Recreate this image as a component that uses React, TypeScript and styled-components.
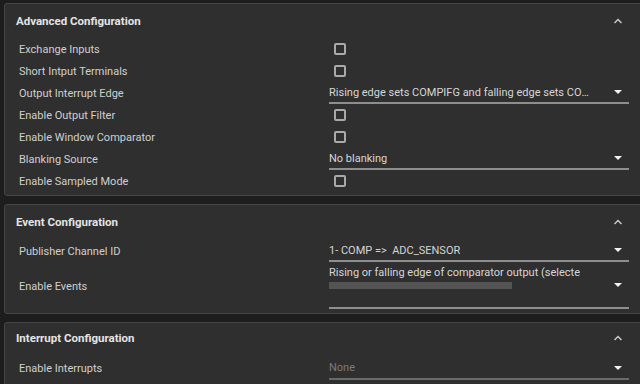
import styled, { createGlobalStyle } from "styled-components";

const Global = createGlobalStyle`
  html, body {
    margin: 0;
    padding: 0;
    background: #1d1d1d;
    overflow: hidden;
  }
  body {
    font-family: Roboto, "Liberation Sans", sans-serif;
    font-size: 11px;
    color: #d2d2d2;
  }
`;

const Page = styled.div`
  display: flex;
  flex-direction: column;
  gap: 8px;
  padding: 3px 0 0 4px;
  margin-right: -8px;
`;

const Panel = styled.section<{ $pb?: number }>`
  background: #2f2f2f;
  border: 1px solid #454545;
  border-radius: 3px;
  padding-bottom: ${(p) => p.$pb ?? 3}px;
`;

const Header = styled.div<{ $h?: number }>`
  display: flex;
  align-items: center;
  justify-content: space-between;
  height: ${(p) => p.$h ?? 34}px;
  padding: 0 24px 0 11px;
  font-weight: 700;
  font-size: 11.5px;
  color: #e4e4e4;
`;

const Row = styled.div<{ $h?: number }>`
  display: grid;
  grid-template-columns: 310px 300px;
  align-items: center;
  height: ${(p) => p.$h ?? 22}px;
  padding-left: 14px;
`;

const Label = styled.div`
  color: #d0d0d0;
`;

const Check = styled.div`
  width: 8px;
  height: 8px;
  margin-left: 5px;
  border: 2px solid #a9a9a9;
  border-radius: 2px;
`;

const Select = styled.div<{ $disabled?: boolean }>`
  display: flex;
  align-items: center;
  justify-content: space-between;
  height: 20px;
  border-bottom: 2px solid ${(p) => (p.$disabled ? "#6a6a6a" : "#8e8e8e")};
  padding-right: 6px;
  color: ${(p) => (p.$disabled ? "#7a7a7a" : "#d6d6d6")};
  white-space: nowrap;
`;

const Value = styled.span`
  overflow: hidden;
  text-overflow: ellipsis;
  max-width: 266px;
`;

const MultiSelect = styled.div`
  display: flex;
  justify-content: space-between;
  height: 44px;
  border-bottom: 2px solid #8e8e8e;
  padding-right: 6px;
  color: #d6d6d6;
`;

const Multi = styled.div`
  display: flex;
  flex-direction: column;
  gap: 2px;
  padding-top: 3px;
`;

const MultiText = styled.div`
  width: 251px;
  overflow: hidden;
  white-space: nowrap;
  line-height: 14px;
`;

const Bar = styled.div`
  width: 183px;
  height: 7px;
  background: #545454;
`;

const CaretSlot = styled.div`
  display: flex;
  align-items: center;
`;

const Caret = () => (
  <svg width="10" height="6" viewBox="0 0 10 6">
    <path d="M1 1h8L5 5z" fill="#f2f2f2" />
  </svg>
);

const Chevron = () => (
  <svg width="10" height="6" viewBox="0 0 10 6">
    <path d="M1.5 5 5 1.5 8.5 5" fill="none" stroke="#c8c8c8" strokeWidth="1.5" />
  </svg>
);

export default function App() {
  return (
    <Page>
      <Global />
      <Panel>
        <Header>
          Advanced Configuration
          <Chevron />
        </Header>
        <Row><Label>Exchange Inputs</Label><Check /></Row>
        <Row><Label>Short Intput Terminals</Label><Check /></Row>
        <Row>
          <Label>Output Interrupt Edge</Label>
          <Select><Value>Rising edge sets COMPIFG and falling edge sets COMPIFG</Value><Caret /></Select>
        </Row>
        <Row><Label>Enable Output Filter</Label><Check /></Row>
        <Row><Label>Enable Window Comparator</Label><Check /></Row>
        <Row>
          <Label>Blanking Source</Label>
          <Select><Value>No blanking</Value><Caret /></Select>
        </Row>
        <Row><Label>Enable Sampled Mode</Label><Check /></Row>
      </Panel>
      <Panel $pb={4}>
        <Header>
          Event Configuration
          <Chevron />
        </Header>
        <Row $h={24}>
          <Label>Publisher Channel ID</Label>
          <Select><Value>1- COMP =&gt;&nbsp; ADC_SENSOR</Value><Caret /></Select>
        </Row>
        <Row $h={46}>
          <Label>Enable Events</Label>
          <MultiSelect>
            <Multi>
              <MultiText>Rising or falling edge of comparator output (selected by IES bit)</MultiText>
              <Bar />
            </Multi>
            <CaretSlot><Caret /></CaretSlot>
          </MultiSelect>
        </Row>
      </Panel>
      <Panel>
        <Header $h={30}>
          Interrupt Configuration
          <Chevron />
        </Header>
        <Row $h={31}>
          <Label>Enable Interrupts</Label>
          <Select $disabled><Value>None</Value><Caret /></Select>
        </Row>
      </Panel>
    </Page>
  );
}
